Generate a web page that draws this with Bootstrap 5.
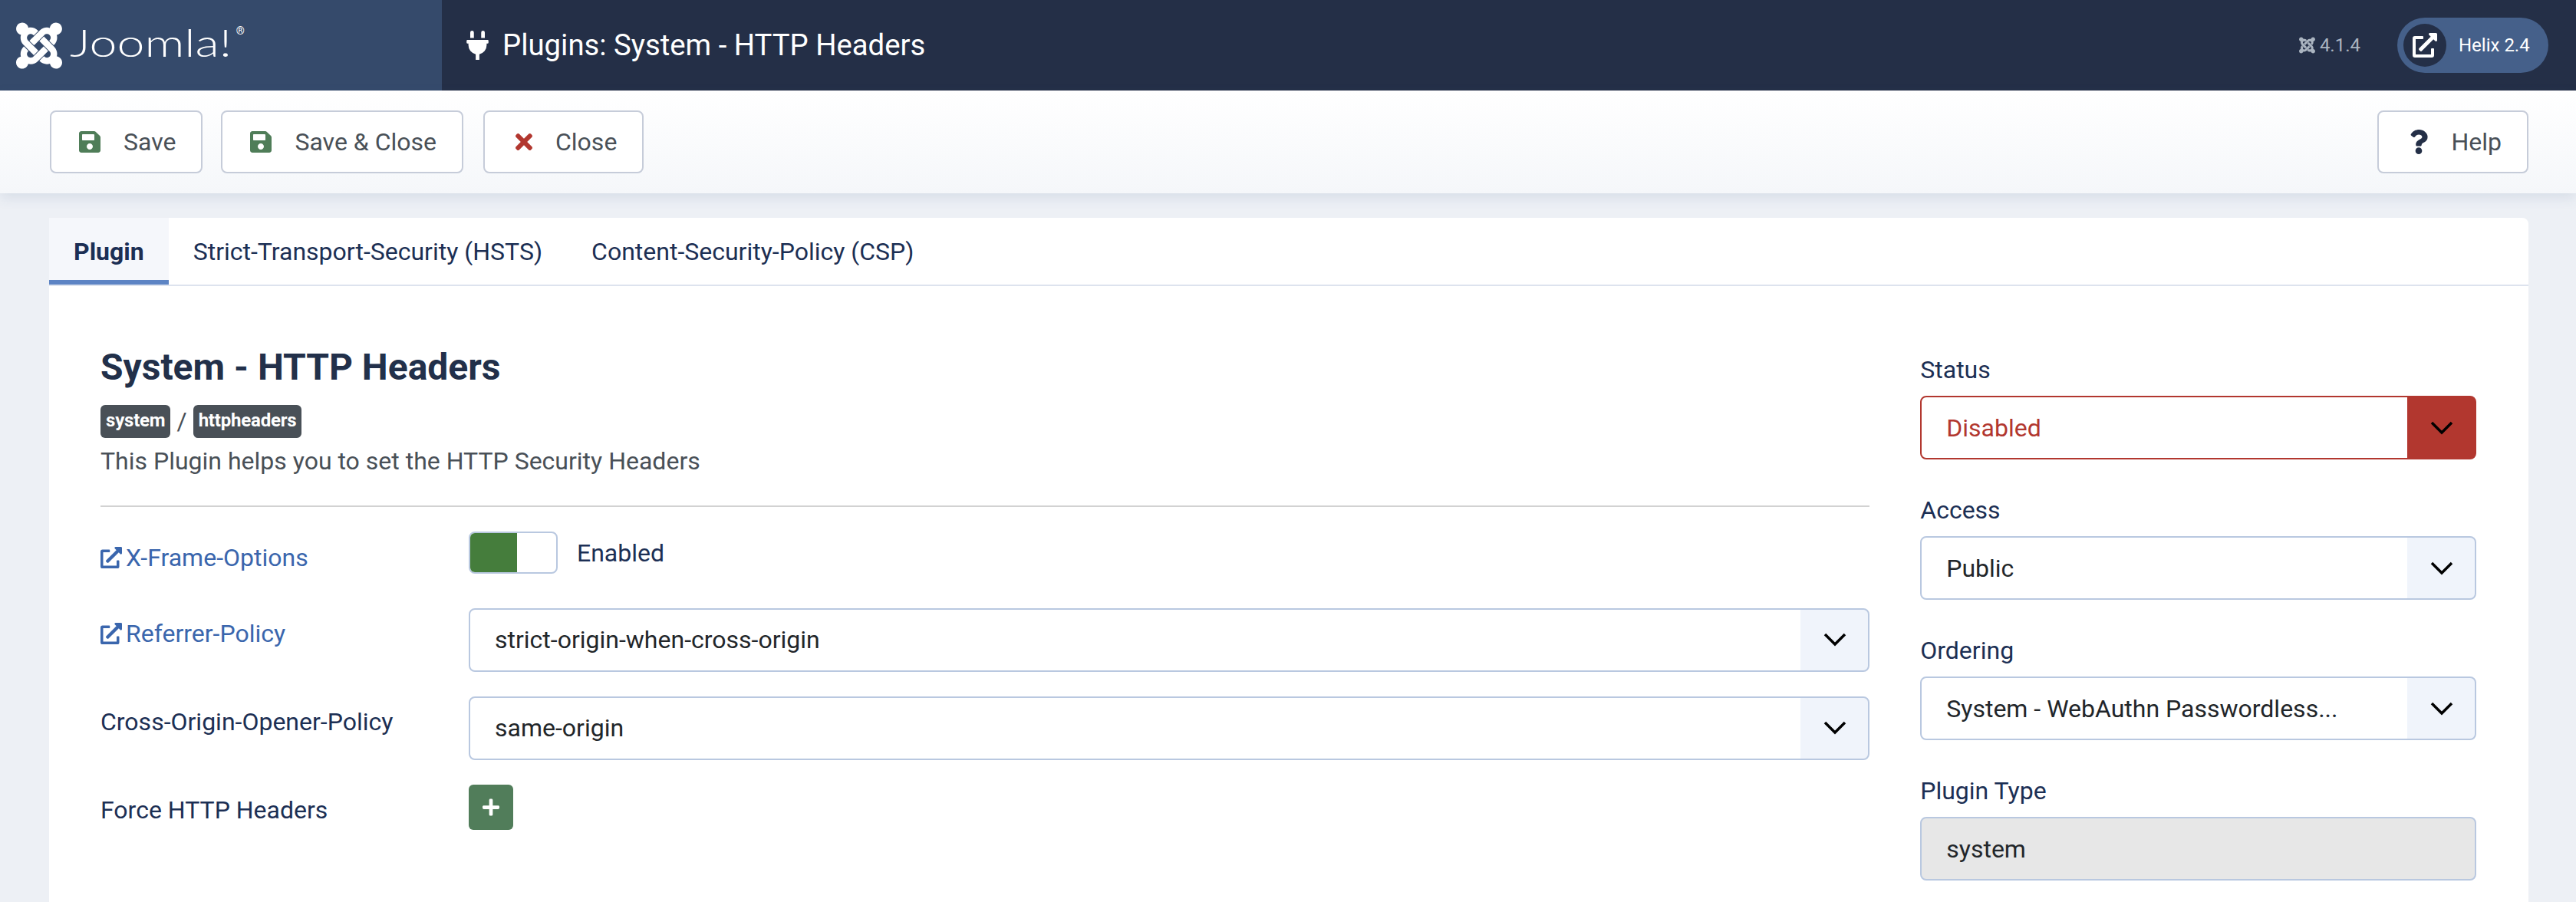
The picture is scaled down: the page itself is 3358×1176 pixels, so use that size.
<!DOCTYPE html>
<html lang="en">
<head>
  <meta charset="UTF-8">
  <title>Plugins: System - HTTP Headers</title>
  <link href="https://cdn.jsdelivr.net/npm/bootstrap@5.3.0/dist/css/bootstrap.min.css" rel="stylesheet">
  <style>
    html { font-size: 32px; }
    body { font-family: Roboto, "Liberation Sans", sans-serif; background: #edf0f5; color: #495057; height: 100vh; overflow: hidden; }
    svg { fill: currentColor; display: block; }

    .top-bar { height: 118px; background: #242f47; color: #fff; }
    .brand-box { width: 576px; background: #354a6b; padding-left: 21px; }
    .brand-name { font-family: Lato, "Open Sans", sans-serif; font-weight: 300; font-size: 50px; line-height: 1; margin: 0 0 8px 10px; transform: scaleX(1.29); transform-origin: left center; }
    .brand-reg { font-size: 14px; align-self: flex-start; margin: 30px 0 0 53px; }
    .page-name { font-size: 38.3px; padding-left: 32px; gap: 18px; }
    .joomla-version { font-size: 24px; color: #aab4c0; gap: 6px; margin-right: 48px; }
    .helix-pill { height: 72px; width: 197px; margin-right: 36px; padding-left: 8px; border-radius: 36px; background: #45608a; font-size: 24px; gap: 16px; }
    .helix-dot { width: 56px; height: 56px; border-radius: 50%; background: #242f47; }

    .tool-bar { height: 134px; padding: 26px 62px 26px 65px; background: linear-gradient(#fff, #f5f7fa); box-shadow: 0 6px 16px rgba(60, 90, 140, .12); position: relative; }
    .tool-btn { height: 82px; padding: 0 33px 0 36px; font-size: 32px; color: #495057; background: #fff; border: 2px solid #c6ccd9; border-radius: 8px; }
    .tool-ico { width: 28px; margin-right: 30px; }
    .ico-green { color: #4f7d58; }
    .ico-red { color: #b2372f; width: 22px; margin-left: 4px; }
    .ico-dark { color: #242f47; width: 24px; margin-left: 4px; }

    .main-card { margin: 32px 62px 0 64px; border: 0; border-radius: 8px 8px 0 0; height: 900px; }
    .tab-strip { height: 89px; border-bottom: 2px solid #dde3ee; }
    .tab-strip .nav-link { height: 87px; padding: 0 32px; font-size: 32px; line-height: 89px; color: #1c2f54; border-bottom: 6px solid transparent; border-radius: 0; }
    .tab-strip .nav-link.active { background: #f5f7fb; font-weight: 700; border-bottom-color: #5d84c4; }
    .card-inner { padding: 77px 68px 0 67px; }
    .plugin-row { --bs-gutter-x: 66px; }
    .plugin-title { font-size: 48px; font-weight: 700; line-height: 1.2; color: #22304a; margin-bottom: 20px; }
    .tag-pill { background: #495057; font-size: 24px; font-weight: 700; letter-spacing: -.2px; border-radius: 6px; padding: 0 7px; height: 43px; line-height: 41px; }
    .tag-sep { margin: 0 8px; font-size: 32px; line-height: 43px; }
    .plugin-desc { font-size: 32px; line-height: 48px; margin: 6px 0 0; }
    .plugin-rule { margin: 34px 0 32px; border-top: 2px solid #d2d2d2; opacity: 1; }

    .field-line { margin-bottom: 32px; }
    .field-label { width: 480px; flex: none; font-size: 32px; line-height: 48px; padding-top: 9px; color: #1c2f54; margin: 0; }
    .field-label a { color: #3a66ad; text-decoration: none; display: inline-flex; align-items: center; gap: 5px; }
    .field-label svg { width: 28px; height: 28px; }
    .toggle-line { margin-bottom: 39px; }
    .toggle-line .field-label { padding-top: 10px; }
    .toggle-box { width: 116px; height: 55px; border: 2px solid #b9c8e0; border-radius: 8px; overflow: hidden; background: #fff; }
    .toggle-on { width: 61px; background: #457d3c; }
    .toggle-text { font-size: 32px; color: #1c2f54; margin-left: 25px; margin-top: 4px; }
    .pick-box, .plain-box { height: 83px; padding: 0 106px 0 32px; font-size: 32px; line-height: 48px; color: #22262a; border: 2px solid #b9c8e0; border-radius: 8px; }
    .pick-box { background: linear-gradient(#f0f4fb, #f0f4fb) right / 88px 100% no-repeat, #fff; background-clip: padding-box; }
    .pick-wrap { position: relative; }
    .pick-wrap svg { position: absolute; top: 50%; right: 30px; width: 30px; height: 18px; margin-top: -9px; fill: none; stroke: #000; stroke-width: 3.5; pointer-events: none; }
    .pick-bad { color: #b2372f; border-color: #b2372f; background: linear-gradient(#b2372f, #b2372f) right / 88px 100% no-repeat, #fff; }
    .plain-box { background: #e7e7e7; padding-right: 32px; }
    .plain-box:disabled { background: #e7e7e7; color: #22262a; opacity: 1; }
    .add-btn { width: 58px; height: 59px; padding: 0; background: #517d5a; border: 0; border-radius: 6px; color: #fff; }
    .add-btn svg { width: 22px; }
    .side-col { padding-top: 8px; }
    .side-label { display: block; font-size: 32px; line-height: 48px; color: #1c2f54; margin-bottom: 10px; }
    .side-group { margin-bottom: 42px; }
  </style>
</head>
<body>
  <header class="top-bar d-flex">
    <div class="brand-box d-flex align-items-center">
      <svg width="60" height="69" viewBox="0 0 448 512"><path d="M.6 92.1C.6 58.8 27.4 32 60.4 32c30 0 54.5 21.9 59.2 50.2 32.6-7.6 67.1.6 96.5 30l-44.3 44.3c-20.5-20.5-42.6-16.3-55.4-3.5-14.3 14.3-14.3 37.9 0 52.2l99.5 99.5-44 44.3c-87.7-87.2-49.7-49.7-99.8-99.7-26.8-26.5-35-64.8-24.8-98.9C20.4 144.6.6 120.7.6 92.1zm129.5 116.4l44.3 44.3c10-10 89.7-89.7 99.7-99.8 14.3-14.3 37.6-14.3 51.9 0 12.8 12.8 17 35-3.5 55.4l44 44.3c31.2-31.2 38.5-67.6 28.9-101.2 29.2-4.1 51.9-29.2 51.9-59.5 0-33.2-26.8-60.1-59.8-60.1-30.3 0-55.4 22.5-59.5 51.6-33.8-9.9-71.7-1.5-98.3 25.1-18.3 19.1-71.1 71.5-99.6 99.9zm266.3 152.2c8.2-32.7-.9-68.5-26.3-93.9-11.8-12.2 5 4.7-99.5-99.7l-44.3 44.3 99.7 99.7c14.3 14.3 14.3 37.6 0 51.9-12.8 12.8-35 17-55.4-3.5l-44 44.3c27.6 30.2 68 38.8 102.7 28 5.5 27.4 29.7 48.1 58.9 48.1 33 0 59.8-26.8 59.8-60.1 0-30.2-22.5-55-51.6-59.1zm-84.3-53.1l-44-44.3c-87 86.4-50.4 50.4-99.7 99.8-14.3 14.3-37.6 14.3-51.9 0-13.1-13.4-16.9-35.3 3.2-55.4l-44-44.3c-30.2 30.2-38 65.2-29.5 98.3-26.7 6-46.2 29.9-46.2 58.2C0 453.2 26.8 480 59.8 480c28.6 0 52.5-19.8 58.6-46.7 32.7 8.2 68.5-.6 94.2-26 32.1-32 12.2-12.4 99.5-99.7z"/></svg>
      <span class="brand-name">Joomla!</span><span class="brand-reg">®</span>
    </div>
    <div class="page-name d-flex align-items-center">
      <svg width="29" height="38" viewBox="0 0 384 512"><path d="M320,32a32,32,0,0,0-64,0v96h64Zm48,128H16A16,16,0,0,0,0,176v32a16,16,0,0,0,16,16H32v32A160.07,160.07,0,0,0,160,412.8V512h64V412.8A160.07,160.07,0,0,0,352,256V224h16a16,16,0,0,0,16-16V176A16,16,0,0,0,368,160ZM128,32a32,32,0,0,0-64,0v96h64Z"/></svg>
      <span>Plugins: System - HTTP Headers</span>
    </div>
    <div class="joomla-version d-flex align-items-center ms-auto">
      <svg width="21" height="24" viewBox="0 0 448 512"><path d="M.6 92.1C.6 58.8 27.4 32 60.4 32c30 0 54.5 21.9 59.2 50.2 32.6-7.6 67.1.6 96.5 30l-44.3 44.3c-20.5-20.5-42.6-16.3-55.4-3.5-14.3 14.3-14.3 37.9 0 52.2l99.5 99.5-44 44.3c-87.7-87.2-49.7-49.7-99.8-99.7-26.8-26.5-35-64.8-24.8-98.9C20.4 144.6.6 120.7.6 92.1zm129.5 116.4l44.3 44.3c10-10 89.7-89.7 99.7-99.8 14.3-14.3 37.6-14.3 51.9 0 12.8 12.8 17 35-3.5 55.4l44 44.3c31.2-31.2 38.5-67.6 28.9-101.2 29.2-4.1 51.9-29.2 51.9-59.5 0-33.2-26.8-60.1-59.8-60.1-30.3 0-55.4 22.5-59.5 51.6-33.8-9.9-71.7-1.5-98.3 25.1-18.3 19.1-71.1 71.5-99.6 99.9zm266.3 152.2c8.2-32.7-.9-68.5-26.3-93.9-11.8-12.2 5 4.7-99.5-99.7l-44.3 44.3 99.7 99.7c14.3 14.3 14.3 37.6 0 51.9-12.8 12.8-35 17-55.4-3.5l-44 44.3c27.6 30.2 68 38.8 102.7 28 5.5 27.4 29.7 48.1 58.9 48.1 33 0 59.8-26.8 59.8-60.1 0-30.2-22.5-55-51.6-59.1zm-84.3-53.1l-44-44.3c-87 86.4-50.4 50.4-99.7 99.8-14.3 14.3-37.6 14.3-51.9 0-13.1-13.4-16.9-35.3 3.2-55.4l-44-44.3c-30.2 30.2-38 65.2-29.5 98.3-26.7 6-46.2 29.9-46.2 58.2C0 453.2 26.8 480 59.8 480c28.6 0 52.5-19.8 58.6-46.7 32.7 8.2 68.5-.6 94.2-26 32.1-32 12.2-12.4 99.5-99.7z"/></svg>
      <span>4.1.4</span>
    </div>
    <div class="helix-pill d-flex align-items-center align-self-center">
      <span class="helix-dot d-flex align-items-center justify-content-center">
        <svg width="32" height="32" viewBox="0 0 512 512"><path d="M432,320H400a16,16,0,0,0-16,16V448H64V128H208a16,16,0,0,0,16-16V80a16,16,0,0,0-16-16H48A48,48,0,0,0,0,112V464a48,48,0,0,0,48,48H400a48,48,0,0,0,48-48V336A16,16,0,0,0,432,320ZM488,0h-128c-21.37,0-32.05,25.91-17,41l35.73,35.73L135,320.37a24,24,0,0,0,0,34L157.67,377a24,24,0,0,0,34,0L435.28,133.32,471,169c15,15,41,4.5,41-17V24A24,24,0,0,0,488,0Z"/></svg>
      </span>
      <span>Helix 2.4</span>
    </div>
  </header>

  <div class="tool-bar d-flex">
    <button class="btn tool-btn d-flex align-items-center" style="margin-right: 24px">
      <svg class="tool-ico ico-green" viewBox="0 0 448 512"><path d="M433.941 129.941l-83.882-83.882A48 48 0 0 0 316.118 32H48C21.49 32 0 53.49 0 80v352c0 26.51 21.49 48 48 48h352c26.51 0 48-21.49 48-48V163.882a48 48 0 0 0-14.059-33.941zM224 416c-35.346 0-64-28.654-64-64 0-35.346 28.654-64 64-64s64 28.654 64 64c0 35.346-28.654 64-64 64zm96-304.52V212c0 6.627-5.373 12-12 12H76c-6.627 0-12-5.373-12-12V108c0-6.627 5.373-12 12-12h228.52c3.183 0 6.235 1.264 8.485 3.515l3.48 3.48A11.996 11.996 0 0 1 320 111.48z"/></svg>
      Save
    </button>
    <button class="btn tool-btn d-flex align-items-center" style="margin-right: 26px">
      <svg class="tool-ico ico-green" viewBox="0 0 448 512"><path d="M433.941 129.941l-83.882-83.882A48 48 0 0 0 316.118 32H48C21.49 32 0 53.49 0 80v352c0 26.51 21.49 48 48 48h352c26.51 0 48-21.49 48-48V163.882a48 48 0 0 0-14.059-33.941zM224 416c-35.346 0-64-28.654-64-64 0-35.346 28.654-64 64-64s64 28.654 64 64c0 35.346-28.654 64-64 64zm96-304.52V212c0 6.627-5.373 12-12 12H76c-6.627 0-12-5.373-12-12V108c0-6.627 5.373-12 12-12h228.52c3.183 0 6.235 1.264 8.485 3.515l3.48 3.48A11.996 11.996 0 0 1 320 111.48z"/></svg>
      Save &amp; Close
    </button>
    <button class="btn tool-btn d-flex align-items-center">
      <svg class="tool-ico ico-red" viewBox="0 0 352 512"><path d="M242.72 256l100.07-100.07c12.28-12.28 12.28-32.19 0-44.48l-22.24-22.24c-12.28-12.28-32.19-12.28-44.48 0L176 189.28 75.93 89.21c-12.28-12.28-32.19-12.28-44.48 0L9.21 111.45c-12.28 12.28-12.28 32.19 0 44.48L109.28 256 9.21 356.07c-12.28 12.28-12.28 32.19 0 44.48l22.24 22.24c12.28 12.28 32.2 12.28 44.48 0L176 322.72l100.07 100.07c12.28 12.28 32.2 12.28 44.48 0l22.24-22.24c12.28-12.28 12.28-32.19 0-44.48L242.72 256z"/></svg>
      Close
    </button>
    <button class="btn tool-btn d-flex align-items-center ms-auto">
      <svg class="tool-ico ico-dark" viewBox="0 0 384 512"><path d="M202.021 0C122.202 0 70.503 32.703 29.914 91.026c-7.363 10.58-5.093 25.086 5.178 32.874l43.138 32.709c10.373 7.865 25.132 6.026 33.253-4.148 25.049-31.381 43.63-49.449 82.757-49.449 30.764 0 68.816 19.799 68.816 49.631 0 22.552-18.617 34.134-48.993 51.164-35.423 19.86-82.299 44.576-82.299 106.405V320c0 13.255 10.745 24 24 24h72.471c13.255 0 24-10.745 24-24v-5.773c0-42.86 125.268-44.645 125.268-160.627C377.504 66.256 286.902 0 202.021 0zM192 373.459c-38.196 0-69.271 31.075-69.271 69.271 0 38.195 31.075 69.27 69.271 69.27s69.271-31.075 69.271-69.271-31.075-69.27-69.271-69.27z"/></svg>
      Help
    </button>
  </div>

  <div class="card main-card">
    <ul class="nav tab-strip">
      <li class="nav-item"><a class="nav-link active" href="#">Plugin</a></li>
      <li class="nav-item"><a class="nav-link" href="#">Strict-Transport-Security (HSTS)</a></li>
      <li class="nav-item"><a class="nav-link" href="#">Content-Security-Policy (CSP)</a></li>
    </ul>
    <div class="card-inner">
      <div class="row plugin-row">
        <div class="col-9">
          <h1 class="plugin-title">System - HTTP Headers</h1>
          <div class="d-flex">
            <span class="badge tag-pill">system</span>
            <span class="tag-sep">/</span>
            <span class="badge tag-pill">httpheaders</span>
          </div>
          <p class="plugin-desc">This Plugin helps you to set the HTTP Security Headers</p>
          <hr class="plugin-rule">

          <div class="field-line toggle-line d-flex">
            <label class="field-label">
              <a href="#"><svg viewBox="0 0 512 512"><path d="M432,320H400a16,16,0,0,0-16,16V448H64V128H208a16,16,0,0,0,16-16V80a16,16,0,0,0-16-16H48A48,48,0,0,0,0,112V464a48,48,0,0,0,48,48H400a48,48,0,0,0,48-48V336A16,16,0,0,0,432,320ZM488,0h-128c-21.37,0-32.05,25.91-17,41l35.73,35.73L135,320.37a24,24,0,0,0,0,34L157.67,377a24,24,0,0,0,34,0L435.28,133.32,471,169c15,15,41,4.5,41-17V24A24,24,0,0,0,488,0Z"/></svg>X-Frame-Options</a>
            </label>
            <div class="toggle-box d-flex"><span class="toggle-on"></span></div>
            <span class="toggle-text">Enabled</span>
          </div>

          <div class="field-line d-flex">
            <label class="field-label">
              <a href="#"><svg viewBox="0 0 512 512"><path d="M432,320H400a16,16,0,0,0-16,16V448H64V128H208a16,16,0,0,0,16-16V80a16,16,0,0,0-16-16H48A48,48,0,0,0,0,112V464a48,48,0,0,0,48,48H400a48,48,0,0,0,48-48V336A16,16,0,0,0,432,320ZM488,0h-128c-21.37,0-32.05,25.91-17,41l35.73,35.73L135,320.37a24,24,0,0,0,0,34L157.67,377a24,24,0,0,0,34,0L435.28,133.32,471,169c15,15,41,4.5,41-17V24A24,24,0,0,0,488,0Z"/></svg>Referrer-Policy</a>
            </label>
            <div class="pick-wrap flex-grow-1">
              <select class="form-select pick-box"><option>strict-origin-when-cross-origin</option></select>
              <svg viewBox="0 0 30 18"><path d="M2 2l13 13L28 2"/></svg>
            </div>
          </div>

          <div class="field-line d-flex">
            <label class="field-label">Cross-Origin-Opener-Policy</label>
            <div class="pick-wrap flex-grow-1">
              <select class="form-select pick-box"><option>same-origin</option></select>
              <svg viewBox="0 0 30 18"><path d="M2 2l13 13L28 2"/></svg>
            </div>
          </div>

          <div class="field-line d-flex">
            <label class="field-label">Force HTTP Headers</label>
            <button class="btn add-btn d-flex align-items-center justify-content-center">
              <svg viewBox="0 0 448 512"><path d="M416 208H272V64c0-17.67-14.33-32-32-32h-32c-17.67 0-32 14.33-32 32v144H32c-17.67 0-32 14.33-32 32v32c0 17.67 14.33 32 32 32h144v144c0 17.67 14.33 32 32 32h32c17.67 0 32-14.33 32-32V304h144c17.67 0 32-14.33 32-32v-32c0-17.67-14.33-32-32-32z"/></svg>
            </button>
          </div>
        </div>

        <div class="col-3 side-col">
          <div class="side-group">
            <label class="side-label">Status</label>
            <div class="pick-wrap">
              <select class="form-select pick-box pick-bad"><option>Disabled</option></select>
              <svg viewBox="0 0 30 18"><path d="M2 2l13 13L28 2"/></svg>
            </div>
          </div>
          <div class="side-group">
            <label class="side-label">Access</label>
            <div class="pick-wrap">
              <select class="form-select pick-box"><option>Public</option></select>
              <svg viewBox="0 0 30 18"><path d="M2 2l13 13L28 2"/></svg>
            </div>
          </div>
          <div class="side-group">
            <label class="side-label">Ordering</label>
            <div class="pick-wrap">
              <select class="form-select pick-box"><option>System - WebAuthn Passwordless...</option></select>
              <svg viewBox="0 0 30 18"><path d="M2 2l13 13L28 2"/></svg>
            </div>
          </div>
          <div class="side-group">
            <label class="side-label">Plugin Type</label>
            <input class="form-control plain-box" value="system" disabled>
          </div>
        </div>
      </div>
    </div>
  </div>
</body>
</html>
